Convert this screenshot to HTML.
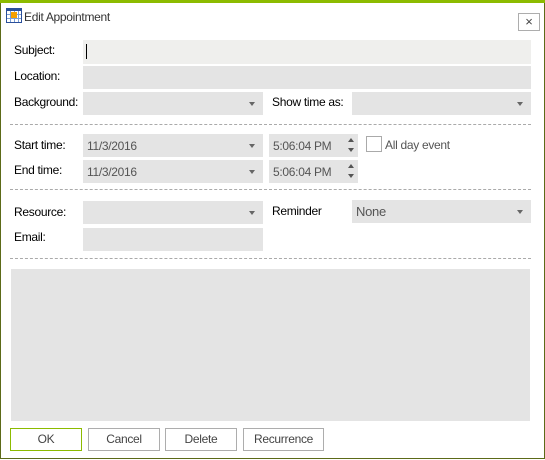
<!DOCTYPE html><html><head><style>
body{margin:0;width:545px;height:460px;position:relative;background:#fff;font-family:"Liberation Sans",sans-serif;font-size:12px;color:#000;overflow:hidden}
.a{position:absolute}
.f{position:absolute;background:#e4e4e4}
.l{position:absolute;font-size:12px;letter-spacing:-0.3px}
.arr{position:absolute;right:8px;top:10px;width:0;height:0;border-left:3px solid transparent;border-right:3px solid transparent;border-top:4px solid #666}
.t{position:absolute;left:4px;top:5px;color:#555;letter-spacing:-0.3px}
.d{position:absolute;left:10px;width:521px;border-top:1px dashed #aaa}
.b{position:absolute;top:428px;height:21px;border:1px solid #adadad;background:#fff;color:#444;text-align:center;line-height:21px;letter-spacing:-0.3px}
.sp{position:absolute;right:4px;width:0;height:0;border-left:3px solid transparent;border-right:3px solid transparent}
</style></head><body>
<div class="a" style="left:0;top:0;width:543px;height:458px;border:1px solid #5c6a18;border-top:none"></div>
<div class="a" style="left:0;top:0;width:545px;height:3px;background:#8cbb00"></div>
<svg class="a" style="left:6px;top:8px" width="16" height="15"><rect x="0.5" y="0.5" width="15" height="14" fill="#fff" stroke="#2a4f9a"/><rect x="1" y="1" width="14" height="2" fill="#2a4f9a"/><path d="M1 6.5H15M1 10.5H15M4.5 3V14M8.5 3V14M12.5 3V14" stroke="#7aa0d8"/><rect x="5" y="4" width="6" height="6" fill="#f5a000"/></svg>
<div class="l" style="left:24px;top:10px;color:#333">Edit Appointment</div>
<div class="a" style="left:518px;top:13px;width:20px;height:16px;border:1px solid #adadad;text-align:center;line-height:15px;font-size:13px;color:#444">×</div>
<div class="l" style="left:14px;top:43px">Subject:</div>
<div class="f" style="left:83px;top:40px;width:448px;height:24px;background:#efefed"></div>
<div class="a" style="left:86px;top:44px;width:1px;height:15px;background:#000"></div>
<div class="l" style="left:14px;top:69px">Location:</div>
<div class="f" style="left:83px;top:66px;width:448px;height:23px"></div>
<div class="l" style="left:14px;top:95px">Background:</div>
<div class="f" style="left:83px;top:92px;width:180px;height:23px"><div class="arr"></div></div>
<div class="l" style="left:272px;top:95px">Show time as:</div>
<div class="f" style="left:352px;top:92px;width:179px;height:23px"><div class="arr"></div></div>
<div class="d" style="top:124px"></div>
<div class="l" style="left:14px;top:138px">Start time:</div>
<div class="f" style="left:83px;top:134px;width:180px;height:23px"><div class="t">11/3/2016</div><div class="arr"></div></div>
<div class="f" style="left:269px;top:134px;width:89px;height:23px"><div class="t">5:06:04 PM</div><div class="sp" style="top:4px;border-bottom:4px solid #555"></div><div class="sp" style="top:14px;border-top:4px solid #555"></div></div>
<div class="a" style="left:366px;top:136px;width:14px;height:14px;border:1px solid #aaa"></div>
<div class="l" style="left:385px;top:138px;color:#555">All day event</div>
<div class="l" style="left:14px;top:163px">End time:</div>
<div class="f" style="left:83px;top:160px;width:180px;height:23px"><div class="t">11/3/2016</div><div class="arr"></div></div>
<div class="f" style="left:269px;top:160px;width:89px;height:23px"><div class="t">5:06:04 PM</div><div class="sp" style="top:4px;border-bottom:4px solid #555"></div><div class="sp" style="top:14px;border-top:4px solid #555"></div></div>
<div class="d" style="top:189px"></div>
<div class="l" style="left:14px;top:205px">Resource:</div>
<div class="f" style="left:83px;top:201px;width:180px;height:23px"><div class="arr"></div></div>
<div class="l" style="left:272px;top:204px">Reminder</div>
<div class="f" style="left:352px;top:200px;width:179px;height:23px"><div class="t" style="font-size:13px;top:4px">None</div><div class="arr"></div></div>
<div class="l" style="left:14px;top:230px">Email:</div>
<div class="f" style="left:83px;top:228px;width:180px;height:23px"></div>
<div class="d" style="top:258px"></div>
<div class="f" style="left:11px;top:269px;width:519px;height:152px"></div>
<div class="b" style="left:10px;width:70px;border-color:#8cbb00">OK</div>
<div class="b" style="left:88px;width:70px">Cancel</div>
<div class="b" style="left:165px;width:70px">Delete</div>
<div class="b" style="left:243px;width:79px">Recurrence</div>
</body></html>
